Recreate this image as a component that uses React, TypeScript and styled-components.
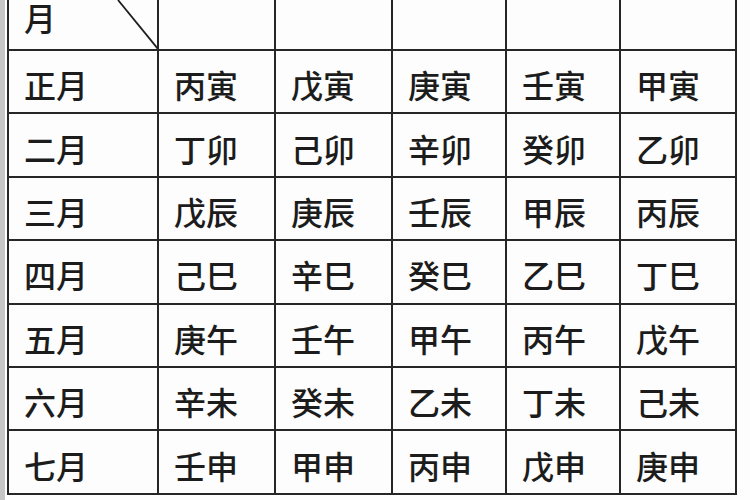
import React from "react";
import styled, { createGlobalStyle } from "styled-components";

const GlobalStyle = createGlobalStyle`
  html, body {
    margin: 0;
    padding: 0;
    background: #ffffff;
    overflow: hidden;
  }
  body {
    font-family: "Noto Sans CJK SC", "Noto Sans", sans-serif;
  }
`;

const Page = styled.div`
  display: flex;
  width: 750px;
  height: 500px;
  background: #fdfdfd;
`;

const LeftEdge = styled.div`
  width: 5px;
  height: 100%;
  background: #c6c6c6;
  margin-right: 2px;
  flex-shrink: 0;
`;

const Grid = styled.div`
  display: grid;
  grid-template-columns: 148px 115px 115px 112px 112px 114px;
  grid-template-rows: 49px repeat(7, 61.4px);
  gap: 2px;
  padding: 0 2px 2px 2px;
  background: #262626;
  align-self: flex-start;
`;

const Cell = styled.div<{ $header?: boolean }>`
  position: relative;
  background: #fdfdfd;
  display: flex;
  align-items: ${(p) => (p.$header ? "flex-end" : "center")};
  padding: ${(p) => (p.$header ? "0 0 16px 15px" : "5px 0 0 15px")};
  box-sizing: border-box;
  font-size: 32px;
  font-weight: 500;
  line-height: 1;
  color: #1c1c1c;
  white-space: nowrap;
`;

const Diagonal = styled.svg`
  position: absolute;
  inset: 0;
  width: 100%;
  height: 100%;
  pointer-events: none;
`;

const months = ["正月", "二月", "三月", "四月", "五月", "六月", "七月"];
const data: string[][] = [
  ["丙寅", "戊寅", "庚寅", "壬寅", "甲寅"],
  ["丁卯", "己卯", "辛卯", "癸卯", "乙卯"],
  ["戊辰", "庚辰", "壬辰", "甲辰", "丙辰"],
  ["己巳", "辛巳", "癸巳", "乙巳", "丁巳"],
  ["庚午", "壬午", "甲午", "丙午", "戊午"],
  ["辛未", "癸未", "乙未", "丁未", "己未"],
  ["壬申", "甲申", "丙申", "戊申", "庚申"],
];

export default function App() {
  return (
    <>
      <GlobalStyle />
      <Page>
        <LeftEdge />
        <Grid>
          <Cell $header>
            月
            <Diagonal viewBox="0 0 148 49" preserveAspectRatio="none">
              <line x1="109" y1="0" x2="149" y2="49" stroke="#1e1e1e" strokeWidth="1.8" />
            </Diagonal>
          </Cell>
          {[0, 1, 2, 3, 4].map((i) => (
            <Cell key={`h${i}`} $header />
          ))}
          {months.map((m, r) => (
            <React.Fragment key={m}>
              <Cell>{m}</Cell>
              {data[r].map((v, c) => (
                <Cell key={`${r}-${c}`}>{v}</Cell>
              ))}
            </React.Fragment>
          ))}
        </Grid>
      </Page>
    </>
  );
}
